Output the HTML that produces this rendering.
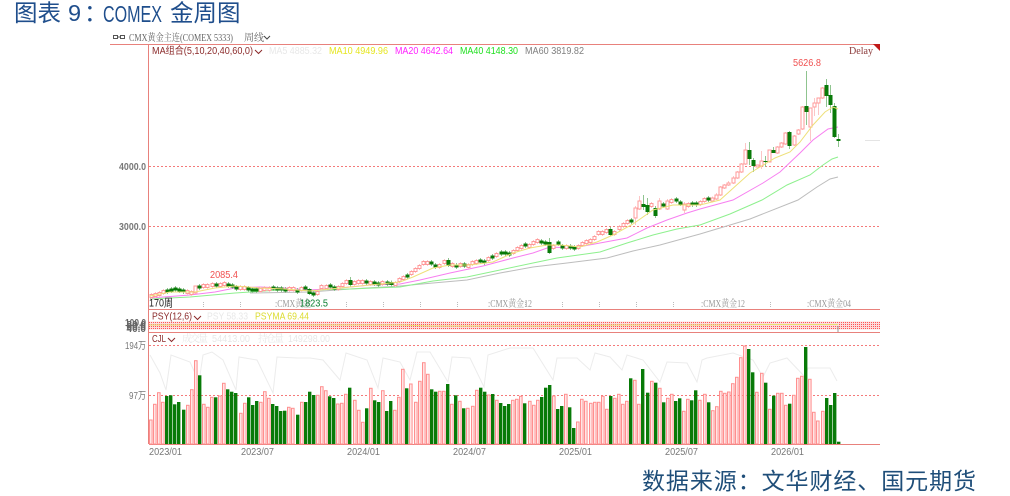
<!DOCTYPE html>
<html><head><meta charset="utf-8">
<style>
html,body{margin:0;padding:0;background:#fff;width:1010px;height:496px;overflow:hidden}
svg{display:block;position:absolute;left:0;top:0;filter:blur(.3px)}
text{white-space:pre}
.s{font-family:"Liberation Sans","Noto Sans CJK SC",sans-serif;font-size:10px}
.c{font-family:"Liberation Serif","Noto Serif CJK SC",serif;font-size:10px}
.l{font-family:"Liberation Sans",sans-serif;font-size:10px;fill:#777}
.y{font-family:"Liberation Sans","Noto Sans CJK SC",sans-serif;font-size:10px;fill:#777}
.t{font-family:"Liberation Sans","Noto Sans CJK SC",sans-serif;font-size:23.500px;fill:#1f4e8c}
.f{font-family:"Liberation Sans","Noto Sans CJK SC",sans-serif;font-size:23px;fill:#1f4e79}
</style></head><body>
<svg xmlns="http://www.w3.org/2000/svg" width="1010" height="496" viewBox="0 0 1010 496">
<defs><pattern id="dots" width="2" height="2" patternUnits="userSpaceOnUse" x="149" y="322"><rect width="1" height="1" fill="#f55"/></pattern></defs>
<!-- title -->
<text class="t" x="14" y="21">图表</text>
<text class="t" x="68" y="21">9</text>
<text class="t" x="84" y="21">：</text>
<text class="t" x="103" y="22" textLength="59" lengthAdjust="spacingAndGlyphs" style="font-size:23px">COMEX</text>
<text class="t" x="170" y="21">金周图</text>
<!-- header -->
<g fill="none" stroke="#555" stroke-width="1"><rect x="113.500" y="35.500" width="4" height="3"/><rect x="120.500" y="35.500" width="4" height="3"/><path d="M117.500 37h3"/></g>
<text class="c" x="129" y="41" fill="#666" textLength="104" lengthAdjust="spacingAndGlyphs">CMX黄金主连(COMEX 5333)</text>
<text class="c" x="244" y="41" fill="#666">周线</text>
<path d="M264 36l3 3 3-3" fill="none" stroke="#444"/>
<!-- frame -->
<g stroke="#e8817c" stroke-width="1" fill="none">
<path d="M110 44.500H880M148.500 44V444M149 309.500H880M149 332.500H880M149 444.500H880"/>
</g>
<path d="M873 44h7v7z" fill="#c01818"/>
<!-- dashed grid -->
<g stroke="#f47a7a" stroke-width="1" stroke-dasharray="2 2" fill="none">
<path d="M149 166.500H880M149 226.500H880M149 345.500H880M149 395.500H880"/>
</g>
<rect x="149" y="321.500" width="731" height="8" fill="#fddcdc"/>
<rect x="149" y="321.500" width="731" height="8" fill="url(#dots)"/>
<path d="M149 325H400L430 326H560L620 325H720L760 324.500H838" stroke="#e8e070" fill="none"/>
<path d="M838 326v6" stroke="#999"/>
<!-- ticks -->
<path d="M167.500 302v6M203.500 302v6M240.500 302v6M346.500 302v6M383.500 302v6M420.500 302v6M457.500 302v6M525.500 302v6M562.500 302v6M599.500 302v6M636.500 302v6M673.500 302v6M770.500 302v6" stroke="#bbb" stroke-dasharray="1 1" fill="none"/>
<!-- open-interest line -->
<path fill="none" stroke="#ececec" d="M150 355L160 373L166 390L171 355L190 362L199 382L203 355L212 352L223 360L236 390L239 357L257 360L273 393L277 357L297 358L310 358L323 360L340 380L346 353L367 360L378 388L383 358L400 362L410 380L417 352L430 352L448 382L452 357L470 358L484 387L488 355L510 348L533 348L553 380L557 358L577 358L590 370L595 353L610 357L622 370L627 355L643 360L660 382L667 362L687 363L697 382L702 360L707 358L733 353L753 360L763 377L770 363L787 358L805 377L808 368L830 368L837 381"/>
<path d="M865 140.500H880" stroke="#e4e4e4"/>
<g id="vol"></g>
<g fill="none" stroke-width="1">
<path stroke="#bdbdbd" d="M250 293L310 292L350 289L400 286L433 283L467 280L500 273L533 267L567 263L607 258L633 251L660 245L700 234L750 219L798 200L817 187L830 179L838 177"/>
<path stroke="#8ef08e" d="M150 299L190 297L235 293L280 290L310 290L350 289L400 287L433 281L467 277L500 270L533 263L557 258L600 252L627 243L653 235L677 229L700 225L730 214L762 200L787 185L810 175L823 165L832 159L838 157"/>
<path stroke="#f77ff0" d="M150 298L190 295L215 292L235 288L260 287L285 288L310 290L340 288L370 285L400 284L420 280L450 273L483 266L513 258L533 253L550 247L573 248L600 243L627 238L647 228L667 220L687 213L700 209L733 200L763 183L780 172L800 153L813 140L828 129L838 127"/>
</g>
<g id="cdl"></g>
<path fill="none" stroke="#eee07a" d="M150 296L170 292L195 292L215 288L235 286L260 288L285 289L310 291L330 289L360 286L380 284L400 282L413 277L433 268L450 265L470 265L493 262L513 253L530 248L547 245L560 245L580 247L597 242L613 235L633 224L653 210L673 205L700 205L720 200L750 173L775 158L790 152L800 142L813 125L825 112L833 107L838 109"/>
<!-- MA row -->
<text class="s" x="152" y="54" fill="#8b2a2a" textLength="101" lengthAdjust="spacingAndGlyphs">MA组合(5,10,20,40,60,0)</text>
<path d="M255 50l3.500 3.500 3.500-3.500" fill="none" stroke="#8b2a2a"/>
<text class="s" x="269" y="54" fill="#e8e8e8" textLength="53" lengthAdjust="spacingAndGlyphs">MA5 4885.32</text>
<text class="s" x="329" y="54" fill="#e6e620" textLength="59" lengthAdjust="spacingAndGlyphs">MA10 4949.96</text>
<text class="s" x="395" y="54" fill="#ff20ff" textLength="58" lengthAdjust="spacingAndGlyphs">MA20 4642.64</text>
<text class="s" x="460" y="54" fill="#20e020" textLength="58" lengthAdjust="spacingAndGlyphs">MA40 4148.30</text>
<text class="s" x="525" y="54" fill="#808080" textLength="59" lengthAdjust="spacingAndGlyphs">MA60 3819.82</text>
<text class="c" x="849" y="54" fill="#8b3a3a" textLength="24" lengthAdjust="spacingAndGlyphs">Delay</text>
<text class="s" x="793" y="66" fill="#f05050" textLength="28" lengthAdjust="spacingAndGlyphs">5626.8</text>
<text class="s" x="210" y="278" fill="#f05050" textLength="28" lengthAdjust="spacingAndGlyphs">2085.4</text>
<!-- contract row -->
<text class="c" x="275" y="307" fill="#999" textLength="36" lengthAdjust="spacingAndGlyphs">:CMX黄金</text>
<text class="c" x="488" y="307" fill="#999" textLength="44" lengthAdjust="spacingAndGlyphs">:CMX黄金12</text>
<text class="c" x="701" y="307" fill="#999" textLength="44" lengthAdjust="spacingAndGlyphs">:CMX黄金12</text>
<text class="c" x="807" y="307" fill="#999" textLength="44" lengthAdjust="spacingAndGlyphs">:CMX黄金04</text>
<text class="s" x="149" y="306.500" fill="#222" style="font-size:11px" textLength="24" lengthAdjust="spacingAndGlyphs">170周</text>
<text class="s" x="300" y="306.500" fill="#0a8030" textLength="28" lengthAdjust="spacingAndGlyphs">1823.5</text>
<!-- y labels -->
<text class="y" x="146" y="170" text-anchor="end" font-weight="bold" textLength="27" lengthAdjust="spacingAndGlyphs">4000.0</text>
<text class="y" x="146" y="230" text-anchor="end" font-weight="bold" textLength="27" lengthAdjust="spacingAndGlyphs">3000.0</text>
<text class="y" x="146" y="326" text-anchor="end" style="fill:#666" font-weight="bold" textLength="21" lengthAdjust="spacingAndGlyphs">100.0</text>
<text class="y" x="146" y="328" text-anchor="end" style="fill:#666" font-weight="bold">80.0</text>
<text class="y" x="146" y="330" text-anchor="end" style="fill:#666" font-weight="bold">60.0</text>
<text class="y" x="146" y="332" text-anchor="end" style="fill:#666" font-weight="bold">40.0</text>
<text class="y" x="146" y="349" text-anchor="end" textLength="21" lengthAdjust="spacingAndGlyphs">194万</text>
<text class="y" x="146" y="399" text-anchor="end" textLength="17" lengthAdjust="spacingAndGlyphs">97万</text>
<!-- PSY row -->
<text class="s" x="152" y="319.500" fill="#8b2a2a" textLength="40" lengthAdjust="spacingAndGlyphs">PSY(12,6)</text>
<path d="M194 316l3.500 3.500 3.500-3.500" fill="none" stroke="#8b2a2a"/>
<text class="s" x="207" y="319.500" fill="#e8e8e8" textLength="41" lengthAdjust="spacingAndGlyphs">PSY 58.33</text>
<text class="s" x="255" y="319.500" fill="#dcdc30" textLength="54" lengthAdjust="spacingAndGlyphs">PSYMA 69.44</text>
<!-- CJL row -->
<text class="s" x="152" y="342" fill="#8b2a2a" textLength="14" lengthAdjust="spacingAndGlyphs">CJL</text>
<path d="M168 338l3.500 3.500 3.500-3.500" fill="none" stroke="#8b2a2a"/>
<text class="c" x="182" y="342" fill="#e8e8e8" textLength="26">成交量</text>
<text class="s" x="212" y="342" fill="#e8e8e8" textLength="38" lengthAdjust="spacingAndGlyphs">54413.00</text>
<text class="c" x="258" y="342" fill="#e8e8e8" textLength="26">持仓量</text>
<text class="s" x="288" y="342" fill="#e8e8e8" textLength="42" lengthAdjust="spacingAndGlyphs">149298.00</text>
<!-- x labels -->
<text class="l" x="149" y="455" textLength="33" lengthAdjust="spacingAndGlyphs">2023/01</text>
<text class="l" x="241" y="455" textLength="33" lengthAdjust="spacingAndGlyphs">2023/07</text>
<text class="l" x="347" y="455" textLength="33" lengthAdjust="spacingAndGlyphs">2024/01</text>
<text class="l" x="453" y="455" textLength="33" lengthAdjust="spacingAndGlyphs">2024/07</text>
<text class="l" x="559" y="455" textLength="33" lengthAdjust="spacingAndGlyphs">2025/01</text>
<text class="l" x="665" y="455" textLength="33" lengthAdjust="spacingAndGlyphs">2025/07</text>
<text class="l" x="771" y="455" textLength="33" lengthAdjust="spacingAndGlyphs">2026/01</text>
<!-- footer -->
<text class="f" x="642" y="489" textLength="334">数据来源：文华财经、国元期货</text>
</svg>
<script>
var g=[4,5,6,7,8,12,16,19,20,21,24,25,26,30,31,32,33,36,38,39,40,44,45,49,53,55,56,58,59,63,69,70,73,75,77,81,82,84,86,87,88,92,96,97,98,100,101,103,104,113,118,121,122,124,126,129,130,133,134,137,147,148,151,153,157,161,166,167,168,169];
var isG={};g.forEach(function(i){isG[i]=1});
var a=[240,193,158,187,168,166,193,186,209,196,149,62,106,193,202,172,172,168,130,148,155,159,220,190,172,195,183,187,155,175,192,198,213,212,202,205,224,187,186,155,165,166,140,152,169,174,192,190,163,143,181,211,247,205,145,181,186,152,213,183,211,172,88,145];
var v=a.map(function(t){return 340+t/3});
[132,187,124,68,103,148,155,154,154,132,193,166,184,205,205,199,151,143,155,165,162,181,189,198,192,181,178,169,190,184,196,181,171,143,135,168,207,198,163,202,264,246,178,184,190,187,187,169,208,168,175,163,193,184,115,121,193,87,158,124,128,145,187,175,163,183,175,214,178,181,151,181,163,187].forEach(function(t){v.push(340+t/3)});
[362,350,304,310,306,281,262,203,168,177,247,307,250,278,358,317,310,310,346,341,316,265,259,171,268,367,393,364,324,345,309,455].forEach(function(t){v.push(290+t/3)});
var m=[296,295,294,292,291,290,289,290,291,292,293,290,287,286,286,285,285,285,284,285,286,288,288,288,289,290,290,290,289,289,288,289,289,290,289,289,291,289,288,292,294,293,287,287,286,288,288,285,282,282,283,282,282,282,283,283,284,283,283,283.5,284,280,278,276,273,270,267,263,263,263,266,266,262,263,265,266,265,265,266,263,262,261,262,259,257,255,253,253,254,252,249,247,245,246,243,241,242,243,248,247,243,247,247,247,248,247,244,242,241,238,233,233,231,232,233,228,225,222,221,213,205,205,208,205,212,205,205,205,201,200,203,207,205,204,204,203,200,199,199.5,197,191,186.5,184,180.5,175,168,157,154.5,163,166,163.5,161.5,156,151.5,150,145,138.5,139,140.5,132,118,109,117,105,100.5,93,90.5,100,121.5,140];
var o={11:[286,293,286,294],39:[289,294,288,295],49:[280,285,277,287],98:[242,253,238,254],73:[260,266,258,267],113:[229,235,227,236],119:[208,218,206,225],120:[201,209,196,210],121:[204,207,195,210],122:[205,212,198,215],124:[208,216,206,218],125:[201,209,198,210],127:[201,209,199,210],131:[204,210,202,213],
139:[195,199,193,200],140:[187,195,186,196],141:[185,188,184,189],142:[183,185,181,186],143:[178,183,176,184],144:[172,178,171,179],145:[164,172,163,173],146:[150,164,143,165],147:[150,159,142,165],148:[160,166,158,172],149:[165,167,165,167],150:[161,166,151,169],151:[161,162,156,167],152:[150,162,150,162],153:[150,153,147,153],154:[147,153,146,154],155:[143,147,142,148],156:[133,144,132,145],157:[132,146,131,149],158:[136,145,135,146],159:[130,134,129,135],160:[107,129,106,130],161:[106,112,71,125],162:[108,127,108,141],163:[103,107,98,116],164:[98,103,98,115],165:[88,98,87,99],166:[85,96,79,107],167:[95,105,85,113],168:[106,137,103,138],169:[139,141,134,147]};
var hv='',hc='';
for(var i=0;i<170;i++){
 var x=149+4.07*i, cx=Math.round(x+1.5)+.5, lx=Math.round(x)+.5, t=v[i]==null?444:v[i];
 var b=o[i]||[m[i]-1.5,m[i]+1.5,m[i]-3,m[i]+3];
 if(isG[i]){
  hv+='<rect x="'+(lx-.5)+'" y="'+t.toFixed(1)+'" width="3.4" height="'+(444-t).toFixed(1)+'" fill="#087a08"/>';
  hc+='<path d="M'+cx+' '+b[2]+'V'+b[3]+'" stroke="#8fc48f" fill="none"/>';
  hc+='<rect x="'+(cx-2)+'" y="'+b[0]+'" width="4" height="'+(b[1]-b[0])+'" fill="#087a08"/>';
 }else{
  hv+='<rect x="'+lx+'" y="'+t.toFixed(1)+'" width="2.6" height="'+(444-t).toFixed(1)+'" fill="#ffe6e6" stroke="#ff8f8f"/>';
  hc+='<path d="M'+cx+' '+b[2]+'V'+b[3]+'" stroke="#fcc6c6" fill="none"/>';
  hc+='<rect x="'+(cx-1.5)+'" y="'+b[0]+'" width="3" height="'+(b[1]-b[0])+'" fill="#fff" stroke="#ff9a9a"/>';
 }
}
document.getElementById('vol').innerHTML=hv;
document.getElementById('cdl').innerHTML=hc;
</script>
</body></html>
